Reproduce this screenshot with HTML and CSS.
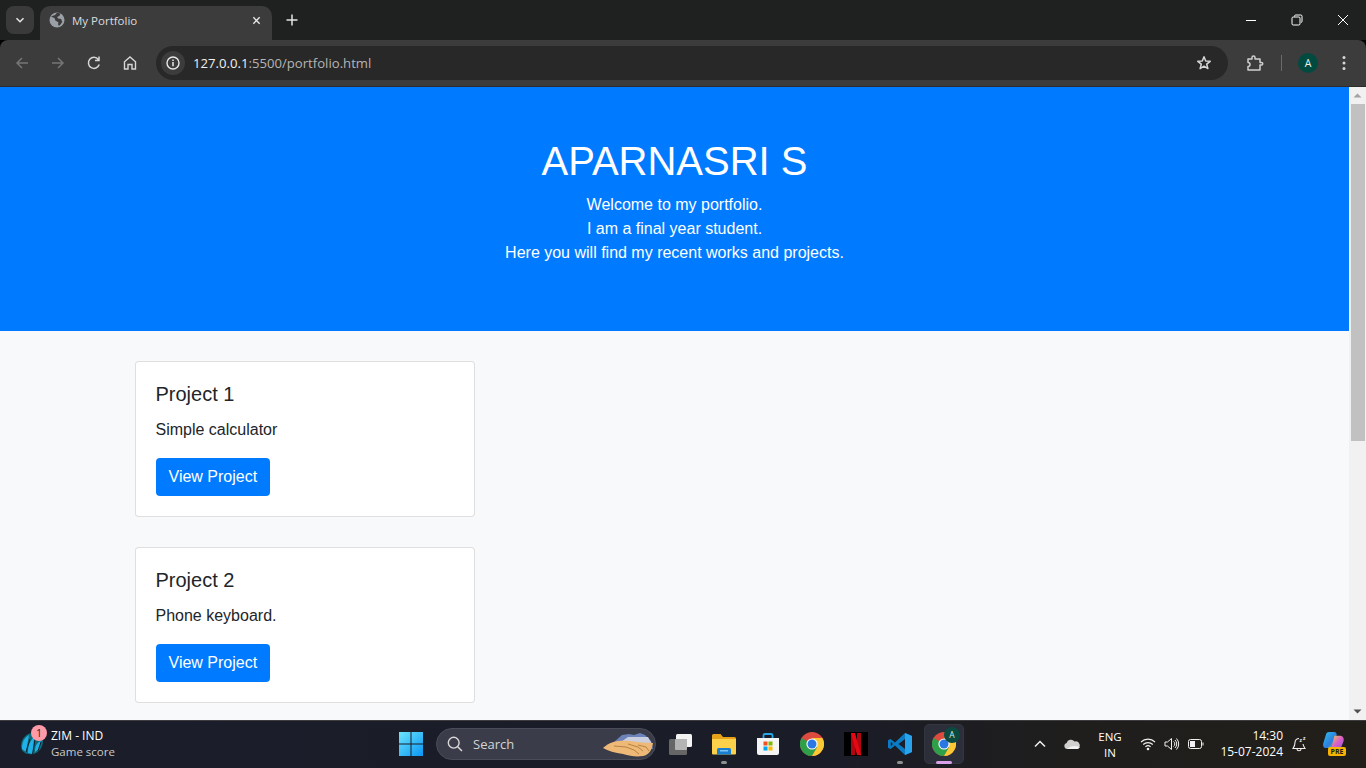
FILE: index.html
```html
<!DOCTYPE html>
<html lang="en">
<head>
<meta charset="utf-8">
<title>My Portfolio</title>
<link rel="stylesheet" href="styles.css">
</head>
<body>
<div class="tabstrip">
  <div class="tabsearch"><svg class="ic10" viewBox="0 0 10 10"><path d="M1.5 3.2 5 6.7l3.5-3.5" fill="none" stroke="#e3e3e3" stroke-width="1.6"/></svg></div>
  <div class="tab">
    <svg class="favicon" viewBox="0 0 16 16"><circle cx="8" cy="8" r="7.5" fill="#9aa0a6"/><path d="M2 4.5 6 3l2-2.2 3.5.6-1 2.4-2.4 1.2 1 1.6 3 .4 1.2 3-2.6 3.6-1.6-.4.2-3-3-1.6-.6-2.4z" fill="#3c3c3c"/></svg>
    <span class="tabtitle">My Portfolio</span>
    <svg class="tabclose" viewBox="0 0 10 10"><path d="M1.5 1.5l7 7m0-7l-7 7" stroke="#e8e8e8" stroke-width="1.5"/></svg>
  </div>
  <svg class="newtab" viewBox="0 0 12 12"><path d="M6 .5v11M.5 6h11" stroke="#e3e3e3" stroke-width="1.5"/></svg>
  <div class="winctrls">
    <svg class="winbtn" viewBox="0 0 12 12"><path d="M1 6.5h10" stroke="#fff"/></svg>
    <svg class="winbtn" viewBox="0 0 12 12"><path d="M3.5 2.5V2a1.2 1.2 0 0 1 1.2-1h5.1A1.2 1.2 0 0 1 11 2.200v5.100A1.200 1.200 0 0 1 10 8.500M1 4.200A1.200 1.200 0 0 1 2.200 3h5.600A1.200 1.200 0 0 1 9 4.200v5.600A1.200 1.200 0 0 1 7.800 11H2.200A1.200 1.200 0 0 1 1 9.800z" fill="none" stroke="#fff"/></svg>
    <svg class="winbtn" viewBox="0 0 12 12"><path d="M1 1l10 10M11 1 1 11" stroke="#fff"/></svg>
  </div>
</div>
<div class="toolbar">
  <svg class="tool tool-first" viewBox="0 0 16 16"><path d="M14 8H3M8 3 3 8l5 5" fill="none" stroke="#757575" stroke-width="1.500"/></svg>
  <svg class="tool" viewBox="0 0 16 16"><path d="M2 8h11M8 3l5 5-5 5" fill="none" stroke="#757575" stroke-width="1.500"/></svg>
  <svg class="tool" viewBox="0 0 16 16"><path d="M13.200 9.500A5.500 5.500 0 1 1 12.300 4.500M13 1.500v4H9" fill="none" stroke="#d6d6d6" stroke-width="1.500"/></svg>
  <svg class="tool" viewBox="0 0 16 16"><path d="M2.500 14V6.800L8 2l5.500 4.800V14h-3.500V9.500H6V14z" fill="none" stroke="#d6d6d6" stroke-width="1.400"/></svg>
  <div class="omnibox">
    <div class="siteinfo"><svg class="ic14" viewBox="0 0 14 14"><circle cx="7" cy="7" r="6" fill="none" stroke="#e8e8e8" stroke-width="1.400"/><path d="M7 6v4.200M7 3.500v1.400" stroke="#e8e8e8" stroke-width="1.500"/></svg></div>
    <span class="url"><span class="urlhost">127.0.0.1</span>:5500/portfolio.html</span>
    <svg class="star" viewBox="0 0 16 16"><path d="M8 1.800 9.700 6l4.500.3-3.500 2.900 1.200 4.400L8 11.200l-3.900 2.400 1.200-4.400-3.500-2.900L6.300 6z" fill="none" stroke="#d6d6d6" stroke-width="1.500" stroke-linejoin="round"/></svg>
  </div>
  <svg class="ext" viewBox="0 0 18 18"><path d="M2 5h4V3.500a1.500 1.500 0 0 1 3 0V5h5v3.500h1.500a1.200 1.200 0 0 1 0 2.500H14v5H2v-3.500a2 2 0 0 0 0-4z" fill="none" stroke="#cfcfcf" stroke-width="1.500" stroke-linejoin="round"/></svg>
  <span class="tooldiv"></span>
  <span class="avatar">A</span>
  <svg class="kebab" viewBox="0 0 4 16"><circle cx="2" cy="2.500" r="1.500" fill="#d6d6d6"/><circle cx="2" cy="8" r="1.500" fill="#d6d6d6"/><circle cx="2" cy="13.500" r="1.500" fill="#d6d6d6"/></svg>
</div>
<div class="viewport">
  <main class="page">
    <header class="hero">
      <h1>APARNASRI S</h1>
      <p>Welcome to my portfolio.<br>I am a final year student.<br>Here you will find my recent works and projects.</p>
    </header>
    <section class="container">
      <article class="card">
        <h5>Project 1</h5>
        <p>Simple calculator</p>
        <a class="btn">View Project</a>
      </article>
      <article class="card">
        <h5>Project 2</h5>
        <p>Phone keyboard.</p>
        <a class="btn">View Project</a>
      </article>
    </section>
  </main>
  <div class="scrollbar">
    <svg class="sbarrow" viewBox="0 0 17 17"><path d="M4.500 10.500 8.500 6.500l4 4z" fill="#a3a3a3"/></svg>
    <div class="sbtrack"><div class="sbthumb"></div></div>
    <svg class="sbarrow" viewBox="0 0 17 17"><path d="M4.500 6.500l4 4 4-4z" fill="#505050"/></svg>
  </div>
</div>
<footer class="taskbar">
  <div class="widget">
    <span class="wicon">
      <svg class="wlogo" viewBox="0 0 24 24"><path d="M1 15C1 8 6 2 13 2c5 0 9 3 10 8 0 6-4 12-10 13C6 24 1 21 1 15z" fill="#0e6a78"/><path d="M2 18C2 11 4 7 9 4L6 21zM8 22c0-7 1-11 6-16l-1 17zM15 21c0-5 1-9 6-11l-2 8z" fill="#1fb2ea"/><path d="M6 21 10 8M12.500 23 15 9M18 20l3-9" stroke="#17202c" stroke-width="1"/></svg>
      <span class="badge">1</span>
    </span>
    <div class="wtext"><div class="wtitle">ZIM - IND</div><div class="wsub">Game score</div></div>
  </div>
  <div class="centerbar">
    <span class="tb"><svg class="i24" viewBox="0 0 24 24"><defs><linearGradient id="w" x1="0" y1="0" x2="1" y2="1"><stop offset="0" stop-color="#6ce4fb"/><stop offset="1" stop-color="#0a96f5"/></linearGradient></defs><path d="M0 0h11.500v11.500H0zM12.500 0H24v11.500H12.500zM0 12.500h11.500V24H0zM12.500 12.500H24V24H12.500z" fill="url(#w)"/></svg></span>
    <div class="search">
      <svg class="i16" viewBox="0 0 16 16"><circle cx="6.700" cy="6.700" r="5.400" fill="none" stroke="#d8d8d8" stroke-width="1.400"/><path d="M10.700 10.700 15 15" stroke="#d8d8d8" stroke-width="1.500"/></svg>
      <span class="searchtxt">Search</span>
      <svg class="sandpic" viewBox="0 0 52 26"><path d="M12 11 20 4l7-1 5 1 6-2 5 2 6 6 2 8H20z" fill="#6d82b8"/><path d="M26 6h20l4 7H16z" fill="#c9cde0"/><path d="M1 17C8 10 18 9 28 10c9 1 16 2 23 2-1 7-4 12-10 13-7 1-13 0-20-2C13 22 6 20 1 17z" fill="#eeb877"/><path d="M12 15l12 1 8 3 5 4M26 13l10 3 5 4M36 14l8 2 3 4" fill="none" stroke="#b58243" stroke-width="1"/></svg>
    </div>
    <span class="tb"><svg class="i24" viewBox="0 0 24 24"><rect x="8" y="2" width="16" height="13" rx="1.500" fill="#f3f3f3"/><rect x="1" y="7" width="18" height="16" rx="1.500" fill="#666"/><rect x="7" y="7" width="12" height="11" rx="1" fill="#b4b4b4"/></svg></span>
    <span class="tb tb-open"><svg class="i24" viewBox="0 0 24 24"><path d="M0 3.500A1.500 1.500 0 0 1 1.500 2h7L11 5h11.500A1.500 1.500 0 0 1 24 6.500V9H0z" fill="#e6a31a"/><path d="M0 7h24v14.500a1 1 0 0 1-1 1H1a1 1 0 0 1-1-1z" fill="#fbd14b"/><path d="M5 22.500v-5A1.500 1.500 0 0 1 6.500 16h11a1.500 1.500 0 0 1 1.500 1.500v5z" fill="#1a7fd0"/><rect x="8" y="18" width="8" height="1.500" fill="#7cc4f2"/></svg><span class="dot"></span></span>
    <span class="tb"><svg class="i24" viewBox="0 0 24 24"><path d="M7.500 6V3.500A1.500 1.500 0 0 1 9 2h6a1.500 1.500 0 0 1 1.500 1.500V6" fill="none" stroke="#25a7e8" stroke-width="1.800"/><path d="M1 6h22v15a2 2 0 0 1-2 2H3a2 2 0 0 1-2-2z" fill="#f4f4f4"/><rect x="7.500" y="9.500" width="4" height="4" fill="#f25022"/><rect x="12.500" y="9.500" width="4" height="4" fill="#7fba00"/><rect x="7.500" y="14.500" width="4" height="4" fill="#00a4ef"/><rect x="12.500" y="14.500" width="4" height="4" fill="#ffb900"/></svg></span>
    <span class="tb"><svg class="i24" viewBox="0 0 24 24"><circle cx="12" cy="12" r="12" fill="#dd4b3e"/><path d="M1.600 6A12 12 0 0 0 12 24l5.200-9z" fill="#2fa04a"/><path d="M22.400 6H12l5.200 9L12 24A12 12 0 0 0 22.400 6z" fill="#fcc934"/><circle cx="12" cy="12" r="5.600" fill="#fff"/><circle cx="12" cy="12" r="4.500" fill="#2b78e4"/></svg></span>
    <span class="tb"><svg class="i24" viewBox="0 0 24 24"><rect width="24" height="24" fill="#000"/><path d="M7 1h4v22l-4 .3z" fill="#b20710"/><path d="M13 1h4v22.300l-4-.3z" fill="#b20710"/><path d="M7 1h4l6 22.300-4-.3z" fill="#e50914"/></svg></span>
    <span class="tb tb-open"><svg class="i24" viewBox="0 0 24 24"><path d="M17 1 24 4v16l-7 3L7 13.500 2.500 17 0 15.700V8.300L2.500 7 7 10.500z" fill="#0a7cc4"/><path d="M17 1 24 4v16l-7 3z" fill="#2aa3ee"/><path d="M17 7v10l-6.500-5z" fill="#1c1f2b"/><path d="M2.800 9.700 5 12l-2.200 2.300z" fill="#1c1f2b"/></svg><span class="dot"></span></span>
    <span class="tb tb-active"><span class="chromewrap"><svg class="i24" viewBox="0 0 24 24"><circle cx="12" cy="12" r="12" fill="#dd4b3e"/><path d="M1.600 6A12 12 0 0 0 12 24l5.200-9z" fill="#2fa04a"/><path d="M22.400 6H12l5.200 9L12 24A12 12 0 0 0 22.400 6z" fill="#fcc934"/><circle cx="12" cy="12" r="5.600" fill="#fff"/><circle cx="12" cy="12" r="4.500" fill="#2b78e4"/></svg><span class="chromebadge">A</span></span><span class="activebar"></span></span>
  </div>
  <div class="tray">
    <svg class="chev" viewBox="0 0 12 8"><path d="M1 6.500 6 1.500l5 5" fill="none" stroke="#f0f0f0" stroke-width="1.500"/></svg>
    <svg class="cloud" viewBox="0 0 16 10"><path d="M3 10a3 3 0 0 1-.4-5.900A4.500 4.500 0 0 1 10.500 2.500 3.500 3.500 0 0 1 13 10z" fill="#d0d0d0"/><path d="M3 10c3-3 7-4 13-2l-2 2z" fill="#f2f2f2"/></svg>
    <div class="lang">ENG<br>IN</div>
    <svg class="wifi" viewBox="0 0 16 14"><path d="M1 5a10 10 0 0 1 14 0M3.200 7.500a7 7 0 0 1 9.600 0M5.400 9.800a4 4 0 0 1 5.200 0" fill="none" stroke="#f0f0f0" stroke-width="1.100"/><circle cx="8" cy="12" r="1.300" fill="#f0f0f0"/></svg>
    <svg class="vol" viewBox="0 0 16 14"><path d="M1 5h2.500L7.500 1.500v11L3.500 9H1z" fill="none" stroke="#f0f0f0"/><path d="M9.500 4.500a3 3 0 0 1 0 5M11 3a5.500 5.500 0 0 1 0 8M12.500 1.500a8 8 0 0 1 0 11" fill="none" stroke="#f0f0f0"/></svg>
    <svg class="batt" viewBox="0 0 16 10"><rect x=".5" y=".5" width="13" height="9" rx="2" fill="none" stroke="#f0f0f0"/><rect x="2" y="2" width="5" height="6" fill="#f0f0f0"/><path d="M14.500 3.500h1v3h-1z" fill="#f0f0f0"/></svg>
    <div class="clock">14:30<br>15-07-2024</div>
    <svg class="bell" viewBox="0 0 16 16"><path d="M8 2.500A4 4 0 0 0 4 6.500c0 3-.5 4-2 6h12c-1-1.500-1.600-2.500-2-4.500M6 13c0 2.400 4 2.400 4 0" fill="none" stroke="#f0f0f0" stroke-width="1.100"/><text class="zz" x="8.500" y="6">z</text><text class="zz" x="12" y="4">z</text></svg>
    <span class="copilot">
      <svg class="copisvg" viewBox="0 0 24 20"><defs><linearGradient id="c1" x1="0" y1="0" x2="1" y2="1"><stop offset="0" stop-color="#2bc4e8"/><stop offset=".6" stop-color="#2f7be0"/><stop offset="1" stop-color="#6fd06a"/></linearGradient><linearGradient id="c2" x1="0" y1="0" x2="1" y2="1"><stop offset="0" stop-color="#f0c84a"/><stop offset=".5" stop-color="#d95fc7"/><stop offset="1" stop-color="#8d5ae0"/></linearGradient></defs><path d="M7 1h6c1.500 0 2 1 2.500 2.500L11 18H5C1 18 .5 15 1.500 12L4 4C4.500 2 5.500 1 7 1z" fill="url(#c1)"/><path d="M13 5h6c3 0 4.500 3 3.500 6l-2 5c-.6 1.600-2 2.500-3.500 2.500h-6C9.500 18 10 16 11 13z" fill="url(#c2)"/></svg>
      <span class="pre">PRE</span>
    </span>
  </div>
</footer>
</body>
</html>
```
FILE: styles.css
```css
* { box-sizing: border-box; }
html, body { margin: 0; height: 100%; overflow: hidden; }
body { width: 1366px; height: 768px; display: flex; flex-direction: column; font-family: "Liberation Sans", Arial, sans-serif; background: #000; }
svg { display: block; flex: none; }

.tabstrip { height: 40px; background: #1f2020; display: flex; align-items: flex-end; padding-left: 6px; flex: none; }
.tabsearch { width: 28px; height: 28px; margin-bottom: 6px; border-radius: 8px; background: #3a3a3a; display: flex; align-items: center; justify-content: center; }
.ic10 { width: 10px; height: 10px; }
.tab { width: 232px; height: 34px; margin-left: 6px; background: #3c3c3c; border-radius: 10px 10px 0 0; display: flex; align-items: center; padding: 0 11px 6px 9px; color: #dcdcdc; }
.favicon { width: 16px; height: 16px; }
.tabtitle { font: 11.500px "Open Sans", "Noto Sans", sans-serif; margin-left: 7px; flex: 1; }
.tabclose { width: 9px; height: 9px; }
.newtab { width: 12px; height: 12px; margin: 0 0 14px 14px; }
.winctrls { margin-left: auto; align-self: stretch; display: flex; align-items: center; padding-right: 17px; gap: 34px; }
.winbtn { width: 12px; height: 12px; }

.toolbar { height: 47px; flex: none; background: #3c3c3c; display: flex; align-items: center; border-radius: 8px 8px 0 0; border-bottom: 1px solid #2c2c2c; }
.tool { width: 16px; height: 16px; margin-left: 20px; }
.tool-first { margin-left: 14px; }
.omnibox { width: 1072px; height: 34px; margin-left: 18px; background: #282828; border-radius: 17px; display: flex; align-items: center; padding: 0 16px 0 5px; }
.siteinfo { width: 24px; height: 24px; border-radius: 50%; background: #3c3c3c; display: flex; align-items: center; justify-content: center; }
.ic14 { width: 14px; height: 14px; }
.url { font: 13.150px "Open Sans", "Noto Sans", sans-serif; color: #b5b5b5; margin-left: 8px; flex: 1; }
.urlhost { color: #f0f0f0; }
.star { width: 16px; height: 16px; }
.ext { width: 18px; height: 18px; margin-left: 18px; }
.tooldiv { width: 1px; height: 16px; background: #6a6a6a; margin-left: 17px; }
.avatar { width: 20px; height: 20px; border-radius: 50%; background: #004a3f; color: #e8f0ee; font: 10.500px/20px "Open Sans", sans-serif; text-align: center; margin-left: 16px; }
.kebab { width: 4px; height: 16px; margin-left: 24px; }

.viewport { height: 633px; flex: none; display: flex; overflow: hidden; background: #f8f9fa; }
.page { width: 1349px; flex: none; overflow: hidden; }
.hero { background: #007bff; color: #fff; text-align: center; padding: 50px 0; height: 244px; }
.hero h1 { margin: 0 0 8px; font-size: 40px; font-weight: 400; line-height: 48px; }
.hero p { margin: 0 0 16px; font-size: 16px; line-height: 24px; }
.container { padding: 30px 134.500px 0; }
.card { width: 340px; height: 156px; background: #fff; border: 1px solid rgba(0,0,0,.125); border-radius: 4px; padding: 20px; margin-bottom: 30px; color: #212529; }
.card h5 { margin: 0 0 12px; font-size: 20px; font-weight: 400; line-height: 24px; }
.card p { margin: 0 0 16px; font-size: 16px; line-height: 24px; }
.btn { display: inline-block; height: 38px; padding: 0 13px; background: #007bff; color: #fff; font-size: 16px; line-height: 38px; border-radius: 4px; }

.scrollbar { width: 17px; flex: none; background: #f1f1f1; display: flex; flex-direction: column; }
.sbarrow { width: 17px; height: 17px; }
.sbtrack { flex: 1; padding: 0 1px 0 2px; }
.sbthumb { height: 337px; background: #c1c1c1; }

.taskbar { height: 48px; flex: none; display: flex; align-items: center; padding-bottom: 1px; background: linear-gradient(90deg, #1b1e2a 0%, #1a1c28 60%, #1f1e1d 78%, #221f1a 100%); border-top: 1px solid #3d3d40; color: #fff; font-family: "Open Sans", "Noto Sans", sans-serif; }
.widget { width: 389px; flex: none; display: flex; align-items: center; padding-left: 20px; }
.wicon { position: relative; width: 24px; height: 26px; margin-right: 7px; }
.wlogo { width: 24px; height: 24px; }
.badge { position: absolute; left: 11px; top: -6px; width: 16px; height: 16px; border-radius: 50%; background: #ff9aa8; color: #1b1e2a; font-size: 10.500px; line-height: 16px; text-align: center; }
.wtext { margin-bottom: 1px; }
.wtitle { font-size: 12px; line-height: 16px; color: #fff; }
.wsub { font-size: 11.500px; line-height: 16px; color: #c8c8c8; }

.centerbar { display: flex; align-items: center; height: 100%; }
.tb { width: 44px; height: 40px; display: flex; align-items: center; justify-content: center; position: relative; flex: none; }
.i24 { width: 24px; height: 24px; }
.i16 { width: 16px; height: 16px; }
.search { width: 220px; height: 32px; margin: 0 2px 0 3px; border-radius: 16px; background: #3a3d49; border: 1px solid #4a4d58; display: flex; align-items: center; padding-left: 10px; position: relative; overflow: hidden; }
.searchtxt { font-size: 13px; color: #d4d4d4; margin-left: 10px; }
.sandpic { width: 52px; height: 26px; position: absolute; right: 1px; top: 2px; }
.dot { position: absolute; left: 19px; bottom: 0; width: 6px; height: 3px; border-radius: 2px; background: #8f8f8f; }
.tb-active { width: 40px; margin-left: 2px; background: #2c2e3a; border-radius: 5px; border: 1px solid #33353f; }
.chromewrap { position: relative; }
.chromebadge { position: absolute; left: 12px; top: -5px; width: 16px; height: 16px; border-radius: 50%; background: #0b4a3f; color: #d8e8e4; font-size: 8.500px; line-height: 16px; text-align: center; }
.activebar { position: absolute; left: 11px; bottom: -1px; width: 16px; height: 3px; border-radius: 2px; background: #d8a0e8; }

.tray { margin-left: auto; display: flex; align-items: center; height: 100%; }
.chev { width: 12px; height: 8px; margin-right: 18px; }
.cloud { width: 16px; height: 10px; margin-right: 15px; }
.lang { width: 30px; margin-right: 15px; padding-top: 1px; font-size: 11.500px; line-height: 16px; text-align: center; }
.wifi { width: 16px; height: 14px; margin-right: 8px; }
.vol { width: 16px; height: 14px; margin-right: 8px; }
.batt { width: 16px; height: 10px; margin-right: 8px; }
.clock { width: 71px; text-align: right; font-size: 12px; line-height: 16px; margin-right: 8px; }
.bell { width: 16px; height: 16px; margin-right: 15px; }
.zz { font: bold 5px "Open Sans", sans-serif; fill: #f0f0f0; }
.copilot { position: relative; width: 24px; height: 26px; margin-right: 20px; }
.copisvg { width: 23px; height: 19px; }
.pre { position: absolute; left: 6px; top: 16px; width: 18px; height: 9px; background: #f5b400; border-radius: 2px; color: #1b1b1b; font: bold 7px/9px "Open Sans", sans-serif; text-align: center; }
```
